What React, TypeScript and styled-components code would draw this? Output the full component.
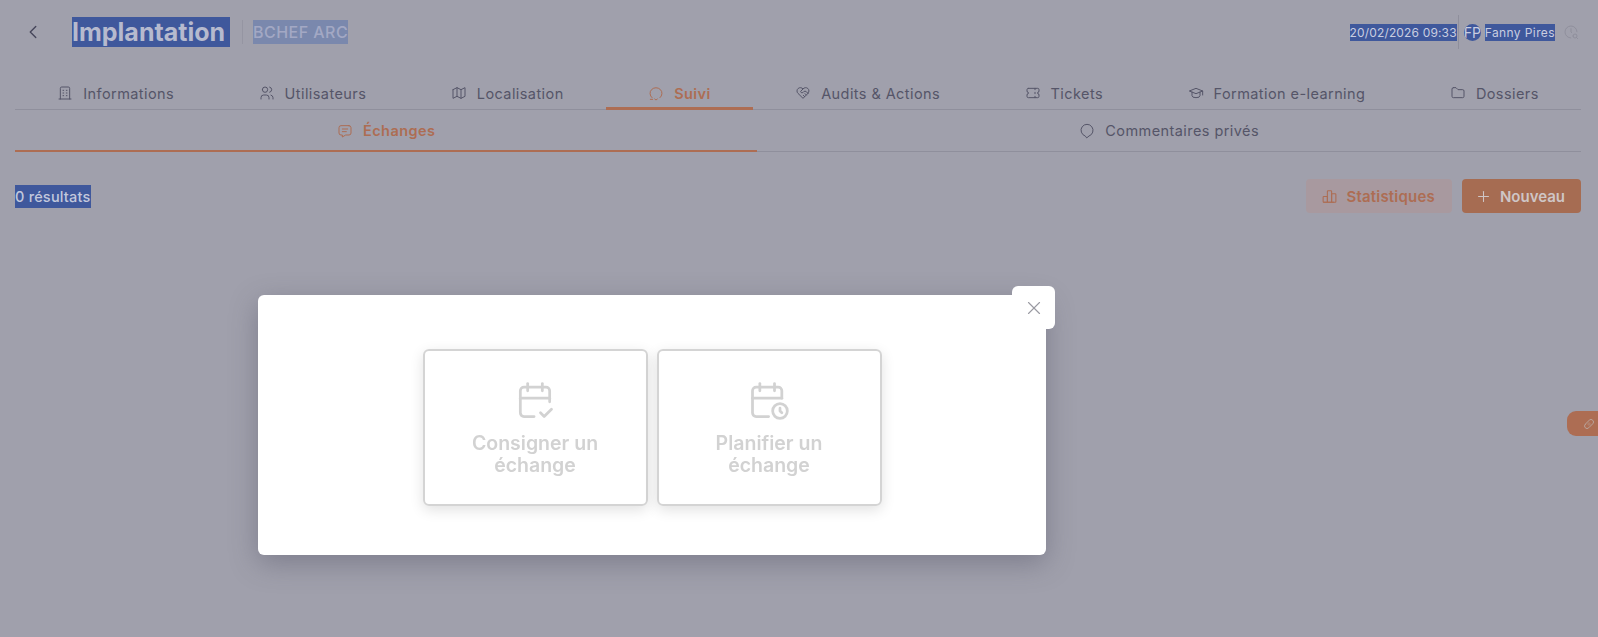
import React from 'react';
import styled, { createGlobalStyle } from 'styled-components';
import {
  TbBuilding,
  TbUsers,
  TbMap,
  TbHeartHandshake,
  TbTicket,
  TbSchool,
  TbFolder,
  TbMessage,
  TbChartBar,
  TbPlus,
  TbX,
  TbChevronLeft,
  TbClockSearch,
  TbCalendarCheck,
  TbCalendarTime,
  TbBandage,
} from 'react-icons/tb';

const GlobalStyle = createGlobalStyle`
  html, body {
    margin: 0;
    padding: 0;
    height: 100%;
    background: #a0a0ac;
  }
  body {
    font-family: Inter, "Liberation Sans", sans-serif;
    color: #555568;
    overflow: hidden;
  }
`;

const Page = styled.div`
  height: 637px;
  padding: 0 17px 0 15px;
  box-sizing: border-box;
  background: #a0a0ac;
`;

const Header = styled.header`
  height: 64px;
  display: flex;
  align-items: center;
  padding-left: 7px;
`;

const BackButton = styled.div`
  width: 50px;
  display: flex;
  color: #45455a;
  font-size: 22px;
  svg {
    stroke-width: 1.5;
  }
`;

const Selected = styled.span`
  background: #3f589c;
`;

const Title = styled(Selected)`
  font-size: 25px;
  line-height: 30px;
  font-weight: 700;
  color: #b6bace;
  padding: 0 5px 0 0;
  white-space: nowrap;
`;

const Company = styled.span`
  margin-left: 12px;
  padding-left: 10px;
  height: 24px;
  border-left: 1px solid #9595a2;
  font-size: 16px;
  letter-spacing: 0.45px;
  line-height: 24px;
  font-weight: 500;
  color: #a3a8c4;
  white-space: nowrap;
  > span {
    background: #7a88ad;
    display: inline-block;
  }
`;

const UserBar = styled.div`
  margin-left: auto;
  display: flex;
  align-items: center;
  height: 34px;
  font-size: 12px;
  color: #c9cde0;
  margin-right: 2px;
  white-space: nowrap;
`;

const Stamp = styled(Selected)<{ $spacing: number }>`
  line-height: 17px;
  letter-spacing: ${({ $spacing }) => $spacing}px;
`;

const Divider = styled.div`
  width: 1px;
  height: 34px;
  background: #8f8f9c;
  margin: 0 5px 0 1px;
`;

const Avatar = styled.div`
  width: 17px;
  height: 17px;
  border-radius: 50%;
  background: #3f589c;
  font-size: 14px;
  line-height: 17px;
  text-align: center;
  overflow: hidden;
  margin-right: 4px;
`;

const ClockIcon = styled.div`
  display: flex;
  margin-left: 8px;
  font-size: 16px;
  color: #8c8c99;
  svg {
    stroke-width: 1.25;
  }
`;

const TabRow = styled.nav<{ $height: number }>`
  display: flex;
  box-sizing: border-box;
  height: ${({ $height }) => $height}px;
  border-bottom: 1px solid #8f8f9c;
`;

const Tab = styled.div<{ $active?: boolean; $thick: number; $top: number }>`
  flex-grow: 1;
  display: flex;
  align-items: center;
  justify-content: center;
  gap: 10px;
  padding: ${({ $top }) => $top}px 20px 0;
  box-sizing: border-box;
  font-size: 14.5px;
  letter-spacing: 0.42px;
  white-space: nowrap;
  font-weight: ${({ $active }) => ($active ? 600 : 400)};
  color: ${({ $active }) => ($active ? '#ad6d53' : '#555568')};
  border-bottom: ${({ $thick }) => $thick}px solid
    ${({ $active }) => ($active ? '#ad6d53' : 'transparent')};
  margin-bottom: -1px;
  svg {
    font-size: 16px;
    stroke-width: 1.5;
  }
`;

const Toolbar = styled.div`
  display: flex;
  align-items: center;
  justify-content: space-between;
  margin-top: 27px;
`;

const Count = styled(Selected)`
  font-size: 14.5px;
  letter-spacing: 0.2px;
  line-height: 23px;
  font-weight: 500;
  color: #c3c8dc;
`;

const Actions = styled.div`
  display: flex;
  gap: 10px;
`;

const ActionButton = styled.div<{ $primary?: boolean }>`
  height: 34px;
  padding: 0 ${({ $primary }) => ($primary ? 16 : 17)}px 0
    ${({ $primary }) => ($primary ? 13 : 15)}px;
  display: flex;
  align-items: center;
  gap: 8px;
  border-radius: 4px;
  font-size: 15px;
  letter-spacing: ${({ $primary }) => ($primary ? 0 : 0.2)}px;
  font-weight: 600;
  color: ${({ $primary }) => ($primary ? '#cfc6c6' : '#ad6d53')};
  background: ${({ $primary }) => ($primary ? '#a66c52' : '#a8999f')};
  svg {
    font-size: 17px;
    stroke-width: 1.5;
  }
`;

const SideHandle = styled.div`
  position: fixed;
  top: 411px;
  right: 0;
  width: 31px;
  height: 25px;
  border-radius: 9px 0 0 9px;
  background: #ad6d53;
  display: flex;
  align-items: center;
  padding-left: 16px;
  box-sizing: border-box;
  color: #b9a49c;
  font-size: 12px;
`;

const Modal = styled.div`
  position: fixed;
  top: 295px;
  left: 258px;
  width: 788px;
  height: 260px;
  background: #fff;
  border-radius: 6px;
  box-shadow: 0 8px 28px rgba(60, 60, 80, 0.35);
  display: flex;
  justify-content: center;
  gap: 9px;
  padding-top: 54px;
  box-sizing: border-box;
`;

const CloseButton = styled.div`
  position: absolute;
  top: -9px;
  right: -9px;
  width: 43px;
  height: 43px;
  background: #fff;
  border-radius: 6px;
  display: flex;
  align-items: center;
  justify-content: center;
  color: #9a9aa2;
  font-size: 22px;
  svg {
    stroke-width: 1.25;
  }
`;

const ChoiceCard = styled.div`
  width: 225px;
  height: 157px;
  box-sizing: border-box;
  border: 2px solid #d4d4d4;
  border-radius: 6px;
  box-shadow: 0 4px 14px rgba(0, 0, 0, 0.12);
  display: flex;
  flex-direction: column;
  align-items: center;
  padding-top: 27px;
  color: #d2d2d2;
`;

const ChoiceIcon = styled.div`
  display: flex;
  font-size: 44px;
  margin-bottom: 10px;
  svg {
    stroke-width: 1.5;
  }
`;

const ChoiceLabel = styled.div`
  width: 160px;
  text-align: center;
  font-size: 19.5px;
  line-height: 22px;
  font-weight: 600;
`;

const LineIcon = styled.svg`
  width: 1em;
  height: 1em;
  fill: none;
  stroke: currentColor;
  stroke-linecap: round;
  stroke-linejoin: round;
`;

const SuiviIcon = () => (
  <LineIcon viewBox="0 0 24 24">
    <path d="M6 19A9 8.5 0 1 1 18 19" />
    <path d="M3.5 21.5H7" />
    <path d="M10 21l2 1.5 2-1.5" />
  </LineIcon>
);

const BalloonIcon = () => (
  <LineIcon viewBox="0 0 24 24">
    <path d="M9 19.5A9 9 0 1 1 15 19.5L12 22Z" />
  </LineIcon>
);

const mainTabs = [
  { label: 'Informations', icon: <TbBuilding /> },
  { label: 'Utilisateurs', icon: <TbUsers /> },
  { label: 'Localisation', icon: <TbMap /> },
  { label: 'Suivi', icon: <SuiviIcon />, active: true },
  { label: 'Audits & Actions', icon: <TbHeartHandshake /> },
  { label: 'Tickets', icon: <TbTicket /> },
  { label: 'Formation e-learning', icon: <TbSchool /> },
  { label: 'Dossiers', icon: <TbFolder /> },
];

const subTabs = [
  { label: 'Échanges', icon: <TbMessage />, active: true },
  { label: 'Commentaires privés', icon: <BalloonIcon /> },
];

const App: React.FC = () => {
  return (
    <>
      <GlobalStyle />
      <Page>
        <Header>
          <BackButton>
            <TbChevronLeft />
          </BackButton>
          <Title>Implantation</Title>
          <Company>
            <span>BCHEF ARC</span>
          </Company>
          <UserBar>
            <Stamp $spacing={0.15}>20/02/2026 09:33</Stamp>
            <Divider />
            <Avatar>FP</Avatar>
            <Stamp $spacing={0.4}>Fanny Pires</Stamp>
            <ClockIcon>
              <TbClockSearch />
            </ClockIcon>
          </UserBar>
        </Header>
        <TabRow $height={46}>
          {mainTabs.map((tab) => (
            <Tab key={tab.label} $active={tab.active} $thick={3} $top={15}>
              {tab.icon}
              {tab.label}
            </Tab>
          ))}
        </TabRow>
        <TabRow $height={42}>
          {subTabs.map((tab) => (
            <Tab key={tab.label} $active={tab.active} $thick={2} $top={1}>
              {tab.icon}
              {tab.label}
            </Tab>
          ))}
        </TabRow>
        <Toolbar>
          <Count>0 résultats</Count>
          <Actions>
            <ActionButton>
              <TbChartBar />
              Statistiques
            </ActionButton>
            <ActionButton $primary>
              <TbPlus />
              Nouveau
            </ActionButton>
          </Actions>
        </Toolbar>
      </Page>
      <SideHandle>
        <TbBandage />
      </SideHandle>
      <Modal>
        <CloseButton>
          <TbX />
        </CloseButton>
        <ChoiceCard>
          <ChoiceIcon>
            <TbCalendarCheck />
          </ChoiceIcon>
          <ChoiceLabel>Consigner un échange</ChoiceLabel>
        </ChoiceCard>
        <ChoiceCard>
          <ChoiceIcon>
            <TbCalendarTime />
          </ChoiceIcon>
          <ChoiceLabel>Planifier un échange</ChoiceLabel>
        </ChoiceCard>
      </Modal>
    </>
  );
};

export default App;
